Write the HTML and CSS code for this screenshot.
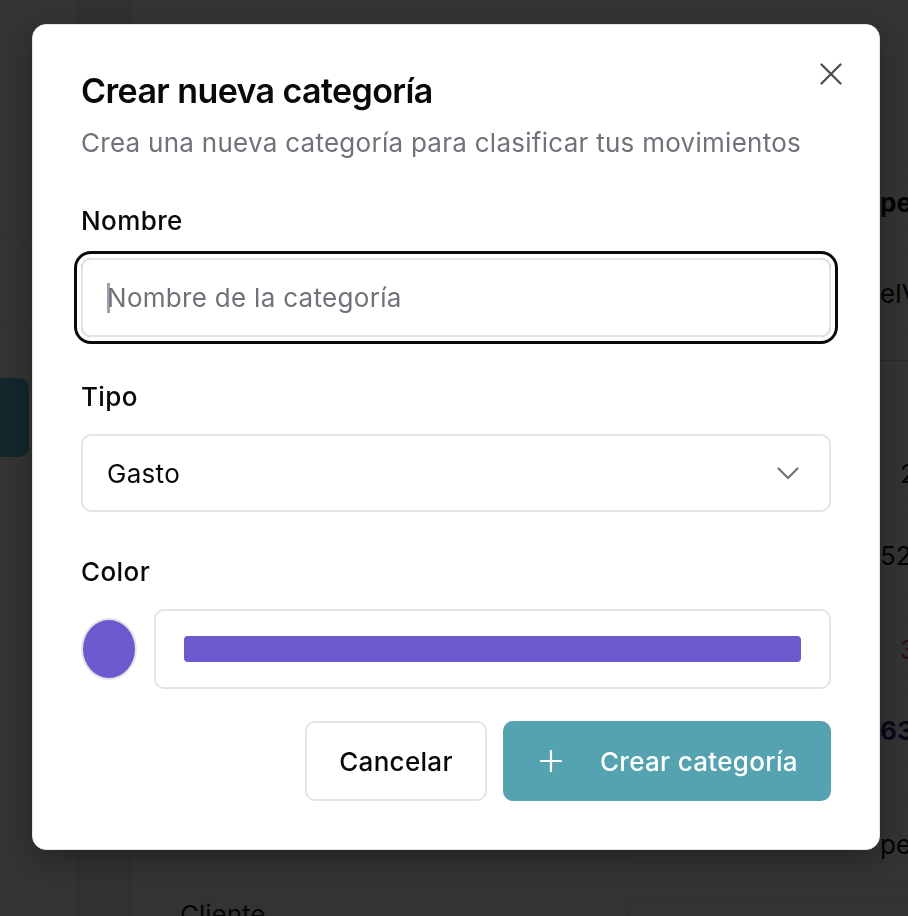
FILE: index.html
```html
<!DOCTYPE html>
<html lang="es">
<head>
<meta charset="utf-8">
<title>Crear nueva categoría</title>
<link rel="stylesheet" href="styles.css">
</head>
<body>
<div class="page">
  <aside class="sidebar">
    <div class="side-card"></div>
    <div class="side-active"></div>
  </aside>
  <div class="rail"></div>
  <main class="main">
    <div class="trow r-top"></div>
    <div class="trow r-18"></div>
    <div class="trow r-head"><span class="cell bold">pe</span></div>
    <div class="trow r-27"></div>
    <div class="trow r-81"><span class="cell">elV</span></div>
    <div class="trow r-27 blue-line"></div>
    <div class="trow r-136"><span class="cell far">2</span></div>
    <div class="trow r-19"></div>
    <div class="trow r-80"><span class="cell">52</span></div>
    <div class="trow r-27"></div>
    <div class="trow r-54"><span class="cell far red">3</span></div>
    <div class="trow r-18"></div>
    <div class="trow r-72"><span class="cell navy">63</span></div>
    <div class="trow r-26"></div>
    <div class="frow r-90">
      <div class="fbox bottom"><span class="cell">pe</span></div>
    </div>
    <div class="frow r-last">
      <span class="flabel">Cliente</span>
      <div class="fbox"></div>
    </div>
  </main>
</div>
<div class="overlay"></div>

<div class="dialog" role="dialog" aria-labelledby="dlg-title">
  <button class="close" aria-label="Cerrar">
    <svg width="22" height="22" viewBox="0 0 22 22" fill="none" stroke="currentColor" stroke-width="2.2" stroke-linecap="round"><path d="M1.5 1.5 L20.5 20.5 M20.5 1.5 L1.5 20.5"/></svg>
  </button>
  <h2 id="dlg-title" class="title">Crear nueva categoría</h2>
  <p class="subtitle">Crea una nueva categoría para clasificar tus movimientos</p>

  <div class="form">
    <div class="field">
      <label class="label">Nombre</label>
      <div class="ring">
        <div class="input"><span class="caret"></span><span class="placeholder">Nombre de la categoría</span></div>
      </div>
    </div>
    <div class="field">
      <label class="label">Tipo</label>
      <div class="input select">
        <span class="value">Gasto</span>
        <svg class="chev" width="22" height="13" viewBox="0 0 22 13" fill="none" stroke="currentColor" stroke-width="2.2" stroke-linecap="round" stroke-linejoin="round"><path d="M1.5 1.5 L11 11 L20.5 1.5"/></svg>
      </div>
    </div>
    <div class="field">
      <label class="label">Color</label>
      <div class="color-row">
        <span class="swatch"></span>
        <div class="input color-input"><span class="bar"></span></div>
      </div>
    </div>
  </div>

  <div class="footer">
    <button class="btn btn-outline">Cancelar</button>
    <button class="btn btn-primary">
      <svg width="22" height="22" viewBox="0 0 22 22" fill="none" stroke="currentColor" stroke-width="2.2" stroke-linecap="round"><path d="M11 1 V21 M1 11 H21"/></svg>
      <span>Crear categoría</span>
    </button>
  </div>
</div>
</body>
</html>
```

FILE: styles.css
```css
* { box-sizing: border-box; }

html, body {
  margin: 0;
  height: 100%;
  overflow: hidden;
}

body {
  font-family: Inter, "Noto Sans", "Liberation Sans", sans-serif;
  background: #fff;
  color: #09090b;
}

/* ---------- background page ---------- */
.page {
  display: flex;
  height: 916px;
  background: #fff;
}

.sidebar {
  width: 78px;
  flex: none;
  border-right: 1px solid #eeeeee;
  display: flex;
  flex-direction: column;
}

.side-card {
  margin-top: 238px;
  width: 28px;
  height: 90px;
  border: 1px solid #e8e8e8;
  border-left: none;
  border-radius: 0 10px 10px 0;
}

.side-active {
  margin-top: 50px;
  width: 29px;
  height: 79px;
  background: #5fbcd0;
  border-radius: 0 10px 10px 0;
}

.rail {
  width: 52px;
  flex: none;
  background: #f2f2f2;
  border-right: 1px solid #e4e4e4;
}

.main {
  flex: 1;
  display: flex;
  flex-direction: column;
  font-size: 26px;
}

.trow {
  display: flex;
  align-items: center;
  padding-left: 750px;
  border-bottom: 1px solid #e6e6e6;
  flex: none;
}

.r-top { height: 162px; }
.r-18 { height: 18px; }
.r-19 { height: 19px; }
.r-26 { height: 26px; }
.r-27 { height: 27px; }
.r-head { height: 46px; }
.r-54 { height: 54px; }
.r-72 { height: 72px; }
.r-80 { height: 80px; }
.r-81 { height: 81px; }
.r-136 { height: 136px; padding-top: 90px; }
.blue-line { border-bottom-color: #c9d3e6; }

.cell { color: #111; white-space: nowrap; }
.cell.bold { font-weight: 700; }
.cell.far { padding-left: 20px; }
.cell.red { color: #d44; }
.cell.navy { color: #1e2a78; font-weight: 700; }

.frow {
  display: flex;
  flex: none;
  margin-left: 50px;
}

.r-90 {
  height: 90px;
  padding-left: 448px;
  align-items: flex-end;
  padding-bottom: 19px;
  border-bottom: 1px solid #e6e6e6;
}

.fbox {
  width: 400px;
  height: 60px;
  border: 1px solid #e4e4e4;
  border-radius: 10px;
  display: flex;
  align-items: center;
  padding-left: 251px;
}

.fbox.bottom {
  align-items: flex-end;
  padding-bottom: 2px;
}

.r-last {
  height: 40px;
  padding-top: 16px;
}

.flabel {
  width: 448px;
  font-size: 26px;
  line-height: 32px;
  color: #222;
}

.overlay {
  position: fixed;
  inset: 0;
  background: rgba(0, 0, 0, 0.8);
}

/* ---------- dialog ---------- */
.dialog {
  position: fixed;
  left: 32px;
  top: 24px;
  width: 848px;
  background: #fff;
  border: 1px solid #e4e4e7;
  border-radius: 14px;
  padding: 48px;
  box-shadow: 0 10px 30px rgba(0, 0, 0, 0.3);
}

.close {
  position: absolute;
  right: 37px;
  top: 38px;
  width: 22px;
  height: 22px;
  padding: 0;
  border: none;
  background: none;
  color: #4a4a4f;
  display: flex;
}

.title {
  margin: 0;
  font-size: 34px;
  line-height: 36px;
  font-weight: 600;
  letter-spacing: -0.6px;
  color: #09090b;
}

.subtitle {
  margin: 16px 0 0;
  font-size: 26px;
  line-height: 36px;
  letter-spacing: 0.27px;
  color: #71717a;
}

.form {
  margin-top: 44px;
  display: flex;
  flex-direction: column;
  gap: 44px;
}

.field {
  display: flex;
  flex-direction: column;
  gap: 21px;
}

.label {
  font-size: 26px;
  line-height: 32px;
  font-weight: 500;
  letter-spacing: 0.4px;
  color: #09090b;
}

.ring {
  border-radius: 10px;
  box-shadow: 0 0 0 4px #fff, 0 0 0 7px #0a0a0a;
}

.input {
  height: 79px;
  border: 2px solid #e4e4e7;
  border-radius: 10px;
  padding: 0 24px;
  display: flex;
  align-items: center;
  font-size: 26px;
  letter-spacing: 0.3px;
  background: #fff;
}

.caret {
  width: 3px;
  height: 30px;
  background: #a1a1aa;
  margin-right: -3px;
}

.placeholder { color: #71717a; }

.select {
  height: 78px;
  justify-content: space-between;
  padding-right: 30px;
}

.value { color: #09090b; }

.chev { color: #737373; }

.color-row {
  display: flex;
  align-items: center;
  gap: 17px;
}

.swatch {
  width: 56px;
  height: 62px;
  flex: none;
  border-radius: 50%;
  background: #6a5acd;
  border: 2px solid #e4e4e7;
}

.color-input {
  flex: 1;
  height: 80px;
  padding: 0 28px;
}

.bar {
  flex: 1;
  height: 26px;
  border-radius: 4px;
  background: #6a5acd;
}

.footer {
  margin-top: 32px;
  display: flex;
  justify-content: flex-end;
  gap: 16px;
}

.btn {
  height: 80px;
  border-radius: 10px;
  font-family: inherit;
  font-size: 26px;
  font-weight: 500;
  letter-spacing: 0.3px;
  display: flex;
  align-items: center;
}

.btn-outline {
  width: 182px;
  justify-content: center;
  background: #fff;
  border: 2px solid #e4e4e7;
  color: #09090b;
}

.btn-primary {
  width: 328px;
  border: none;
  background: #55a3b0;
  color: #fff;
  padding-left: 37px;
  gap: 38px;
}
```
